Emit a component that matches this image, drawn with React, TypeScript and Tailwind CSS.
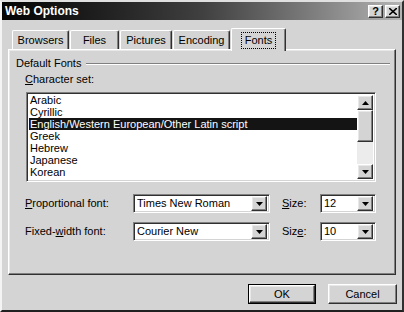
import React from "react";

const raised =
  "border border-t-white border-l-white border-r-[#303030] border-b-[#303030] shadow-[inset_-1px_-1px_#808080,inset_1px_1px_#e8e8e8]";
const sunken =
  "border border-t-[#808080] border-l-[#808080] border-r-white border-b-white shadow-[inset_1px_1px_#303030,inset_-1px_-1px_#d4d4d4]";

function Down() {
  return (
    <svg width="7" height="4" viewBox="0 0 7 4">
      <path d="M0 0h7L3.5 4z" fill="#000" />
    </svg>
  );
}
function Up() {
  return (
    <svg width="7" height="4" viewBox="0 0 7 4">
      <path d="M0 4h7L3.5 0z" fill="#000" />
    </svg>
  );
}

function Combo({ value, w }: { value: string; w: string }) {
  return (
    <div className={`${sunken} ${w} h-[19px] bg-white flex items-center pl-[3px] pr-[2px]`}>
      <span className="flex-1 text-[11px] leading-none">{value}</span>
      <div className={`${raised} w-[16px] h-[15px] bg-[#d4d4d4] flex items-center justify-center`}>
        <Down />
      </div>
    </div>
  );
}

export default function App() {
  const items = ["Arabic", "Cyrillic", "English/Western European/Other Latin script", "Greek", "Hebrew", "Japanese", "Korean"];
  const tabs = [
    { t: "Browsers", w: "w-[57px]" },
    { t: "Files", w: "w-[49px]" },
    { t: "Pictures", w: "w-[52px]" },
    { t: "Encoding", w: "w-[57px]" },
  ];
  return (
    <div
      className="w-[404px] h-[312px] bg-[#d4d4d4] text-black overflow-hidden border-2 border-t-[#e0e0e0] border-l-[#f4f4f4] border-r-[#303030] border-b-[#202020] flex flex-col"
      style={{ fontFamily: '"Liberation Sans", Arial, sans-serif' }}
    >
      {/* Title bar */}
      <div className="h-[18px] bg-gradient-to-r from-[#050505] via-[#404040] to-[#b4b4b4] flex items-center pl-[3px] pr-[2px]">
        <span className="flex-1 text-white font-bold text-[12px] leading-none">Web Options</span>
        <div className={`${raised} w-[15px] h-[13px] bg-[#d4d4d4] flex items-center justify-center text-[11px] font-bold leading-none`}>?</div>
        <div className={`${raised} ml-[2px] w-[15px] h-[13px] bg-[#d4d4d4] flex items-center justify-center`}>
          <svg width="8" height="7" viewBox="0 0 8 7">
            <path d="M0 0L8 7M8 0L0 7" stroke="#000" strokeWidth="1.6" />
          </svg>
        </div>
      </div>

      {/* Tabs */}
      <div className="mt-[8px] ml-[8px] flex items-end h-[21px] relative z-10">
        {tabs.map((tb, i) => (
          <div
            key={tb.t}
            className={`${tb.w} ${i === 0 ? "ml-[2px]" : "ml-[1px]"} h-[19px] border-t border-l border-r border-t-white border-l-white border-r-[#303030] shadow-[inset_-1px_0_#808080] rounded-t-[2px] flex items-center justify-center text-[11px] leading-none`}
          >
            {tb.t}
          </div>
        ))}
        <div className="w-[55px] ml-[1px] -mb-[2px] h-[23px] bg-[#d4d4d4] border-t border-l border-r border-t-white border-l-white border-r-[#303030] shadow-[inset_-1px_0_#808080] rounded-t-[2px] flex items-start justify-center pt-[3px]">
          <span className="text-[11px] leading-none border border-dotted border-black px-[3px] py-[2px]">Fonts</span>
        </div>
      </div>

      {/* Panel */}
      <div className={`mx-[6px] h-[226px] ${raised} flex flex-col pl-[7px]`}>
        <div className="mt-[7px] flex items-center pr-[5px]">
          <span className="text-[11px] leading-[13px]">Default Fonts</span>
          <div className="flex-1 ml-[5px] h-[2px] border-t border-t-[#808080] border-b border-b-white" />
        </div>
        <div className="mt-[3px] ml-[9px] text-[11px] leading-[13px]">
          <span className="underline">C</span>haracter set:
        </div>
        <div className={`${sunken} mt-[6px] ml-[10px] w-[350px] h-[90px] bg-white flex px-[2px] pt-[1px] pb-[2px]`}>
          <div className="flex-1 flex flex-col">
            {items.map((it, i) => (
              <div
                key={it}
                className={`h-[12.6px] flex items-center pl-[1px] text-[11px] leading-none ${i === 2 ? "bg-[#141414] text-white" : ""}`}
              >
                {it}
              </div>
            ))}
          </div>
          <div className="w-[16px] flex flex-col bg-[#ececec] mt-[1px]">
            <div className={`${raised} h-[15px] bg-[#d4d4d4] flex items-center justify-center`}>
              <Up />
            </div>
            <div className={`${raised} h-[32px] bg-[#d4d4d4]`} />
            <div className="flex-1" />
            <div className={`${raised} h-[15px] bg-[#d4d4d4] flex items-center justify-center`}>
              <Down />
            </div>
          </div>
        </div>

        <div className="mt-[12px] flex items-center">
          <div className="w-[108px] ml-[9px] text-[11px] leading-none">
            <span className="underline">P</span>roportional font:
          </div>
          <Combo value="Times New Roman" w="w-[137px]" />
          <div className="w-[38px] ml-[12px] text-[11px] leading-none">
            <span className="underline">S</span>ize:
          </div>
          <Combo value="12" w="w-[56px]" />
        </div>
        <div className="mt-[9px] flex items-center">
          <div className="w-[108px] ml-[9px] text-[11px] leading-none">
            Fixed-<span className="underline">w</span>idth font:
          </div>
          <Combo value="Courier New" w="w-[137px]" />
          <div className="w-[38px] ml-[12px] text-[11px] leading-none">
            Siz<span className="underline">e</span>:
          </div>
          <Combo value="10" w="w-[56px]" />
        </div>
      </div>

      {/* Buttons */}
      <div className="mt-[9px] flex justify-end pr-[5px] gap-[12px]">
        <div className="w-[68px] h-[20px] border border-black">
          <div className={`${raised} w-full h-full bg-[#d4d4d4] flex items-center justify-center text-[11px] leading-none`}>OK</div>
        </div>
        <div className={`${raised} w-[69px] h-[20px] bg-[#d4d4d4] flex items-center justify-center text-[11px] leading-none`}>Cancel</div>
      </div>
    </div>
  );
}
